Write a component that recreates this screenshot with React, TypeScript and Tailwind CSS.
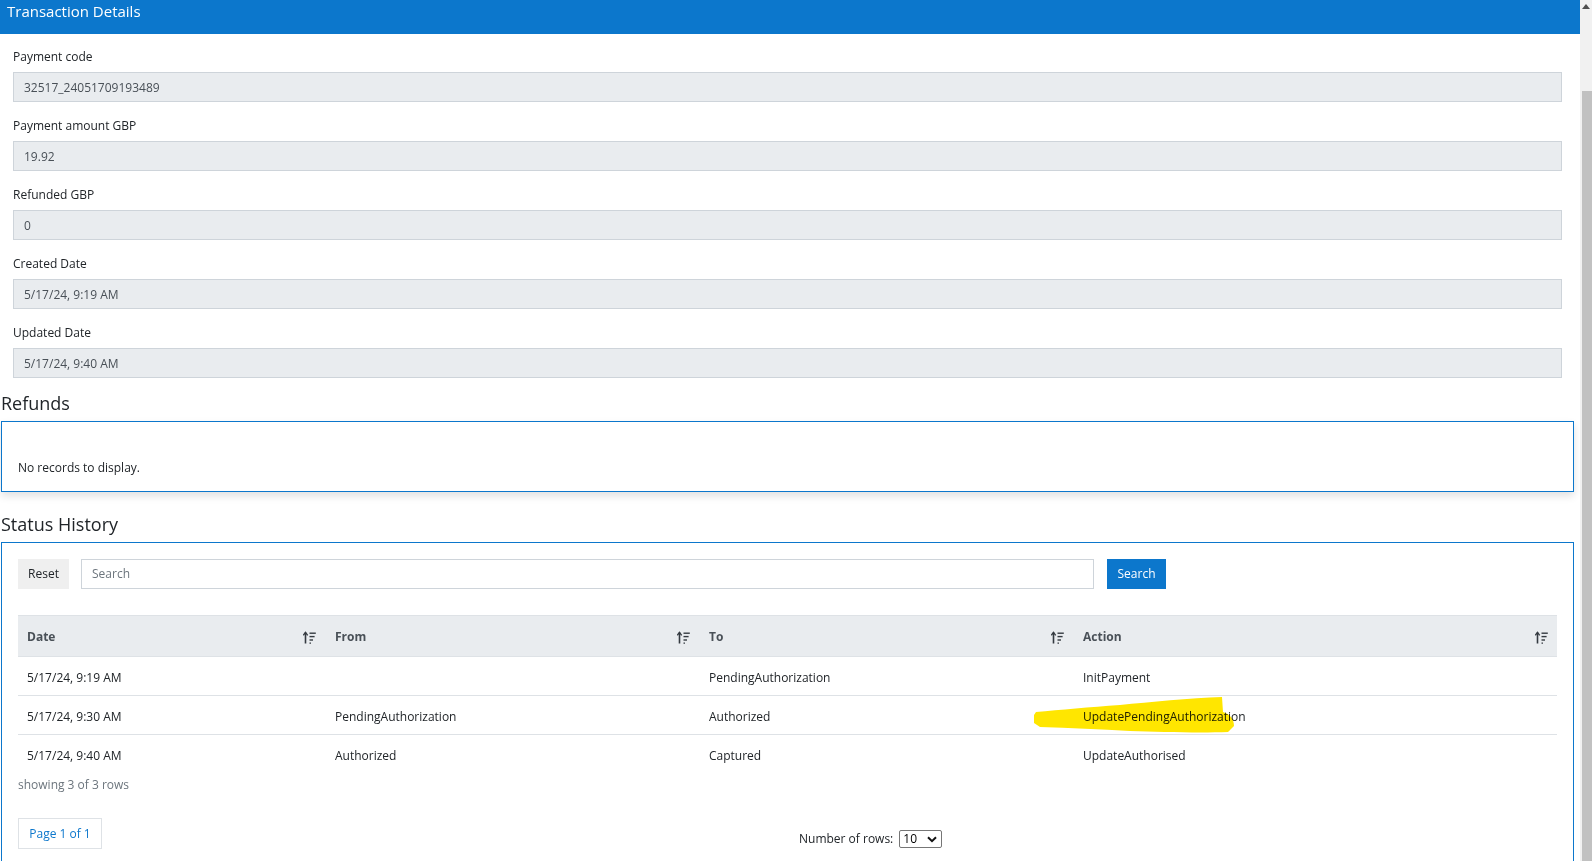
import React from "react";

function SortIcon() {
  return (
    <svg width="13" height="13" viewBox="0 0 13 13" className="shrink-0">
      <path d="M2.5 1.5V12.5" stroke="#343a40" strokeWidth="1.6" />
      <path d="M0.3 4.3L2.5 1.3L4.7 4.3" stroke="#343a40" strokeWidth="1.3" fill="none" />
      <path d="M6.5 2.2H12.8" stroke="#343a40" strokeWidth="1.4" />
      <path d="M6.5 5.6H11.6" stroke="#343a40" strokeWidth="1.4" />
      <path d="M6.5 9H10" stroke="#343a40" strokeWidth="1.4" />
      <path d="M6.5 12.1H8" stroke="#343a40" strokeWidth="1.4" />
    </svg>
  );
}

const fields = [
  { label: "Payment code", value: "32517_24051709193489" },
  { label: "Payment amount GBP", value: "19.92" },
  { label: "Refunded GBP", value: "0" },
  { label: "Created Date", value: "5/17/24, 9:19 AM" },
  { label: "Updated Date", value: "5/17/24, 9:40 AM" },
];

const rows = [
  { date: "5/17/24, 9:19 AM", from: "", to: "PendingAuthorization", action: "InitPayment" },
  { date: "5/17/24, 9:30 AM", from: "PendingAuthorization", to: "Authorized", action: "UpdatePendingAuthorization" },
  { date: "5/17/24, 9:40 AM", from: "Authorized", to: "Captured", action: "UpdateAuthorised" },
];

const cols = ["Date", "From", "To", "Action"];

export default function App() {
  return (
    <div
      className="relative flex h-[861px] w-[1592px] overflow-hidden bg-white text-[#212529]"
      style={{ fontFamily: '"Open Sans", "Noto Sans", sans-serif' }}
    >
      <div className="flex w-[1580px] shrink-0 flex-col">
        {/* Header */}
        <div className="h-[34px] shrink-0 bg-[#0c77cc] pl-[7px] text-[15px] leading-[22px] text-white">
          Transaction Details
        </div>

        {/* Fields */}
        <div className="flex flex-col pl-[13px] pr-[18px] pt-[12px]">
          {fields.map((f, i) => (
            <div key={f.label} className={i < fields.length - 1 ? "mb-[13px]" : ""}>
              <div className="mb-[6px] h-[20px] pt-[1px] text-[12px] leading-[20px]">{f.label}</div>
              <div className="flex h-[30px] items-center border border-[#ced4da] bg-[#e9ecef] pl-[10px] pt-[1px] text-[12px] text-[#495057]">
                {f.value}
              </div>
            </div>
          ))}
        </div>

        {/* Refunds */}
        <div className="mt-[13px] mb-[6px] h-[24px] pl-[1px] text-[18px] leading-[24px]">Refunds</div>
        <div className="ml-[1px] h-[71px] w-[1573px] shrink-0 border border-[#0c77cc] pl-[16px] pt-[36px] text-[12px] leading-[20px] shadow-[0_4px_8px_rgba(0,0,0,0.12)]">
          No records to display.
        </div>

        {/* Status History */}
        <div className="mt-[20px] mb-[6px] h-[24px] pl-[1px] text-[18px] leading-[24px]">Status History</div>
        <div className="ml-[1px] w-[1573px] flex-1 border border-b-0 border-[#0c77cc] px-[16px] pt-[16px]">
          <div className="flex items-center">
            <div className="flex h-[30px] w-[51px] items-center justify-center bg-[#efefef] text-[12px] text-[#212529]">
              Reset
            </div>
            <div className="ml-[12px] flex h-[30px] w-[1013px] items-center border border-[#ced4da] pl-[10px] text-[12px] text-[#6c757d]">
              Search
            </div>
            <div className="ml-[13px] flex h-[30px] w-[59px] items-center justify-center bg-[#0c77cc] text-[12px] text-white">
              Search
            </div>
          </div>

          {/* Table */}
          <div className="mt-[26px] w-[1539px]">
            <div className="grid h-[42px] grid-cols-[307px_374px_374px_484px] border-y border-[#dee2e6] bg-[#e9ecef] pt-[2px] text-[12px] font-bold text-[#495057]">
              {cols.map((c, i) => (
                <div key={c} className={`flex items-center justify-between ${i === 0 ? "pl-[9px]" : "pl-[10px]"} pr-[9px]`}>
                  <span>{c}</span>
                  <SortIcon />
                </div>
              ))}
            </div>
            {rows.map((r, i) => (
              <div
                key={i}
                className={`grid h-[39px] grid-cols-[307px_374px_374px_484px] pt-[3px] text-[12px] ${
                  i < rows.length - 1 ? "border-b border-[#dee2e6]" : ""
                }`}
              >
                <div className="flex items-center pl-[9px]">{r.date}</div>
                <div className="flex items-center pl-[10px]">{r.from}</div>
                <div className="flex items-center pl-[10px]">{r.to}</div>
                <div className="flex items-center pl-[10px]">{r.action}</div>
              </div>
            ))}
            <div className="h-[20px] pt-[1px] text-[12px] leading-[20px] text-[#6c757d]">showing 3 of 3 rows</div>
            <div className="mt-[24px] flex items-start">
              <div className="flex h-[31px] w-[84px] items-center justify-center border border-[#dee2e6] text-[12px] text-[#0c77cc]">
                Page 1 of 1
              </div>
              <div className="ml-[697px] mt-[11px] flex h-[20px] items-center text-[12px] text-[#212529]">
                <span>Number of rows:</span>
                <div className="ml-[6px] flex h-[18px] w-[43px] items-center justify-between rounded-[2px] border border-[#767676] pl-[3px] pr-[4px] text-[12px] text-black">
                  <span>10</span>
                  <svg width="10" height="7" viewBox="0 0 10 7">
                    <path d="M1 1.2L5 5.2L9 1.2" stroke="#111" strokeWidth="2" fill="none" />
                  </svg>
                </div>
              </div>
            </div>
          </div>
        </div>
      </div>

      {/* Scrollbar */}
      <div className="flex w-[12px] shrink-0 flex-col bg-[#f1f1f1]">
        <div className="flex h-[91px] shrink-0 justify-center pt-[4px]">
          <svg width="8" height="5" viewBox="0 0 8 5">
            <path d="M0 5L4 0L8 5Z" fill="#505050" />
          </svg>
        </div>
        <div className="ml-[2px] flex-1 bg-[#c1c1c1]" />
      </div>

      {/* Marker highlight */}
      <svg
        className="pointer-events-none absolute left-[1030px] top-[694px] mix-blend-multiply"
        width="210"
        height="42"
        viewBox="0 0 210 42"
      >
        <path
          d="M6 18 C30 16 60 13 90 11 C120 8 160 4 192 3 L193 18 C200 20 204 25 204 32 L198 38 C170 39 130 38 100 37 C70 35 40 34 10 33 L4 29 L4 21 Z"
          fill="#ffe600"
        />
      </svg>
    </div>
  );
}
